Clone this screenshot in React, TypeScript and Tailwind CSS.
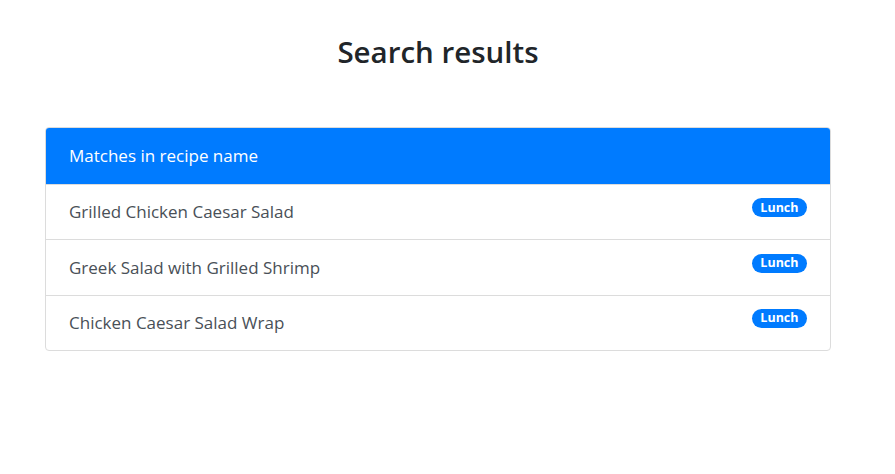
const recipes = [
  "Grilled Chicken Caesar Salad",
  "Greek Salad with Grilled Shrimp",
  "Chicken Caesar Salad Wrap",
]

export default function App() {
  return (
    <div
      className="min-h-[474px] bg-white text-[#212529]"
      style={{ fontFamily: '"Open Sans", "Noto Sans", sans-serif' }}
    >
      <div className="ml-[45px] w-[786px] pt-[30px]">
        <h2 className="text-center text-[29.5px] font-semibold leading-[44px]">Search results</h2>
        <div className="mt-[53px] overflow-hidden rounded-[4px] border border-[#dcdcdc]">
          <div className="bg-[#007bff] px-[23px] py-4 text-[17px] leading-6 text-white">Matches in recipe name</div>
          {recipes.map((name) => (
            <div
              key={name}
              className="flex items-start justify-between border-t border-[#dcdcdc] px-[23px] py-[15.2px] text-[17px] leading-6 text-[#495057]"
            >
              <span>{name}</span>
              <span className="mt-[-2px] flex h-[19px] items-center rounded-full bg-[#007bff] px-[8.5px] text-[12.5px] font-bold text-white">
                Lunch
              </span>
            </div>
          ))}
        </div>
      </div>
    </div>
  )
}
